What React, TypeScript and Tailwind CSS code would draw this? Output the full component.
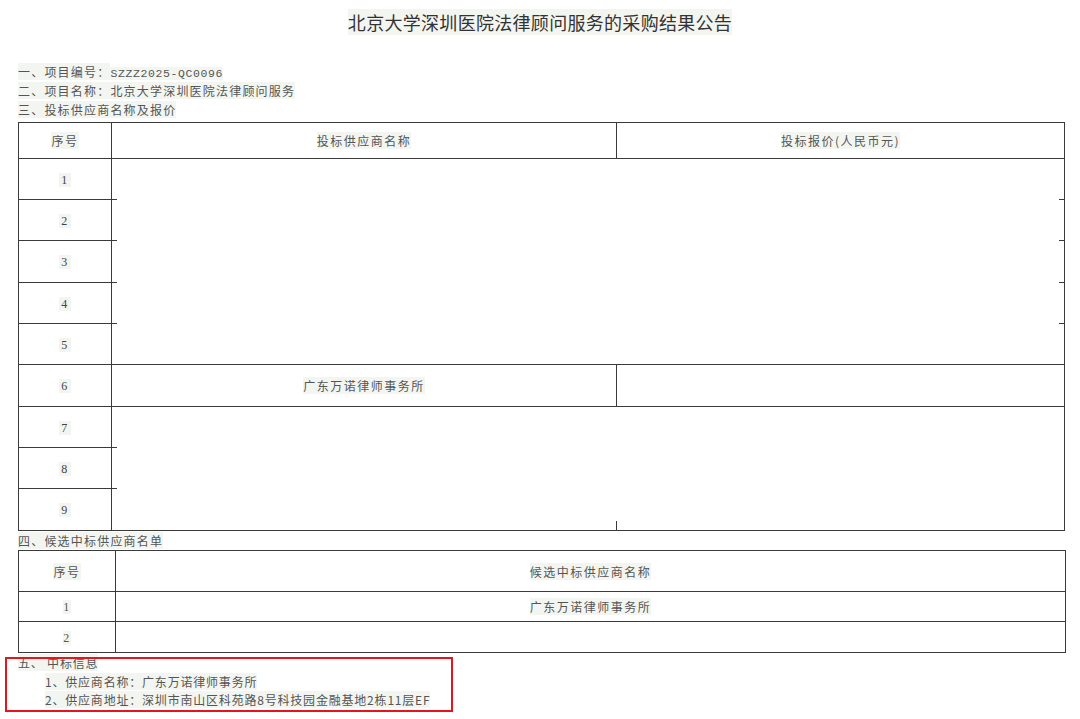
import React from "react";

const line = "bg-[#3a3a3a]";

function Hl({ children, className = "" }: { children: React.ReactNode; className?: string }) {
  return <span className={`bg-[#f3f5f0] ${className}`}>{children}</span>;
}

function NumCell({ n, h, tick }: { n: number; h: number; tick?: boolean }) {
  return (
    <td
      className="relative border border-[#3a3a3a] p-0 text-center align-middle"
      style={{ height: h }}
    >
      <Hl className="font-['Liberation_Serif',serif] text-[12px] text-[#444] px-[2px]">{n}</Hl>
      {tick && <span className={`absolute right-[-6px] bottom-[-1px] h-px w-[6px] ${line}`} />}
    </td>
  );
}

export default function App() {
  const rowsA = [41, 41, 42, 41, 41];
  const rowsB = [41, 41, 42];
  return (
    <div className="relative min-h-[719px] w-[1080px] bg-white font-['Noto_Sans_CJK_SC','Noto_Sans',sans-serif] text-[#444]">
      <div className="h-[35px] pt-[9px] text-center text-[18px] leading-[26px]">
        <Hl className="text-[#333] tracking-[0.3px]">
          北京大学深圳医院法律顾问服务的采购结果公告
        </Hl>
      </div>

      <div className="mt-[27px] pl-[18px] pr-[15px] text-[12px] leading-[19px] tracking-[1.2px] text-[#555]">
        <div className="h-[19px] overflow-hidden">
          <Hl>一、项目编号：</Hl>
          <Hl className="font-['Liberation_Mono',monospace] text-[11.5px] tracking-[0.6px]">SZZZ2025-QC0096</Hl>
        </div>
        <div className="h-[19px]">
          <Hl>二、项目名称：北京大学深圳医院法律顾问服务</Hl>
        </div>
        <div className="h-[19px]">
          <Hl>三、投标供应商名称及报价</Hl>
        </div>

        <table className="mt-[3px] w-[1047px] table-fixed border-collapse border border-[#3a3a3a] text-[12px] tracking-[1.5px]">
          <colgroup>
            <col className="w-[93px]" />
            <col className="w-[505px]" />
            <col />
          </colgroup>
          <tbody>
            <tr>
              <td className="h-[36px] border border-[#3a3a3a] p-0 text-center">
                <Hl>序号</Hl>
              </td>
              <td className="border border-[#3a3a3a] p-0 text-center">
                <Hl>投标供应商名称</Hl>
              </td>
              <td className="border border-[#3a3a3a] p-0 text-center">
                <Hl>投标报价(人民币元)</Hl>
              </td>
            </tr>
            {rowsA.map((h, i) => (
              <tr key={`a${i}`}>
                <NumCell n={i + 1} h={h} tick={i < 4} />
                {i === 0 && (
                  <td colSpan={2} rowSpan={5} className="relative border border-[#3a3a3a] p-0">
                    <span className={`absolute right-0 top-[40px] h-px w-[5px] ${line}`} />
                    <span className={`absolute right-0 top-[81px] h-px w-[5px] ${line}`} />
                    <span className={`absolute right-0 top-[123px] h-px w-[5px] ${line}`} />
                    <span className={`absolute right-0 top-[164px] h-px w-[5px] ${line}`} />
                  </td>
                )}
              </tr>
            ))}
            <tr>
              <NumCell n={6} h={42} />
              <td className="border border-[#3a3a3a] p-0 text-center">
                <Hl>广东万诺律师事务所</Hl>
              </td>
              <td className="border border-[#3a3a3a] p-0" />
            </tr>
            {rowsB.map((h, i) => (
              <tr key={`b${i}`}>
                <NumCell n={i + 7} h={h} tick={i < 2} />
                {i === 0 && (
                  <td colSpan={2} rowSpan={3} className="relative border border-[#3a3a3a] p-0">
                    <span className={`absolute left-[504px] bottom-0 h-[9px] w-px ${line}`} />
                  </td>
                )}
              </tr>
            ))}
          </tbody>
        </table>

        <div className="h-[19px]">
          <Hl>四、候选中标供应商名单</Hl>
        </div>

        <table className="w-[1048px] table-fixed border-collapse border border-[#3a3a3a] text-[12px] tracking-[1.5px]">
          <colgroup>
            <col className="w-[97px]" />
            <col />
          </colgroup>
          <tbody>
            <tr>
              <td className="h-[41px] border border-[#3a3a3a] p-0 text-center">
                <Hl>序号</Hl>
              </td>
              <td className="border border-[#3a3a3a] p-0 text-center">
                <Hl>候选中标供应商名称</Hl>
              </td>
            </tr>
            <tr>
              <td className="h-[30px] border border-[#3a3a3a] p-0 text-center">
                <Hl className="font-['Liberation_Serif',serif]">1</Hl>
              </td>
              <td className="border border-[#3a3a3a] p-0 text-center">
                <Hl>广东万诺律师事务所</Hl>
              </td>
            </tr>
            <tr>
              <td className="h-[31px] border border-[#3a3a3a] p-0 text-center">
                <Hl className="font-['Liberation_Serif',serif]">2</Hl>
              </td>
              <td className="border border-[#3a3a3a] p-0" />
            </tr>
          </tbody>
        </table>

        <div className="mt-[1px] leading-[18.5px] tracking-[0.8px]">
          <div className="h-[18.5px]">
            <Hl>五、 中标信息</Hl>
          </div>
          <div className="h-[18.5px] pl-[27px]">
            <Hl>1、供应商名称：广东万诺律师事务所</Hl>
          </div>
          <div className="h-[18.5px] pl-[27px]">
            <Hl>2、供应商地址：深圳市南山区科苑路8号科技园金融基地2栋11层EF</Hl>
          </div>
        </div>
      </div>

      <div className="pointer-events-none absolute left-[5px] top-[657px] h-[55px] w-[448px] border-2 border-[#e8141b]" />
    </div>
  );
}
